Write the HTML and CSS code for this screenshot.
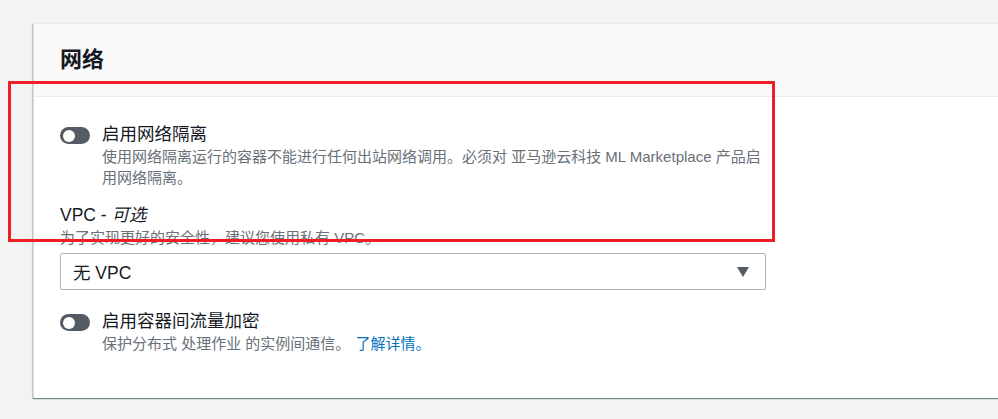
FILE: index.html
```html
<!DOCTYPE html>
<html lang="zh-CN">
<head>
<meta charset="utf-8">
<title>网络</title>
<link rel="stylesheet" href="styles.css">
</head>
<body>
<div class="page">
  <section class="card">
    <header class="card-header">
      <h2 class="card-title">网络</h2>
    </header>
    <div class="card-body">
      <div class="toggle-field">
        <span class="toggle"><span class="knob"></span></span>
        <div class="toggle-text">
          <div class="label">启用网络隔离</div>
          <div class="desc">使用网络隔离运行的容器不能进行任何出站网络调用。必须对 亚马逊云科技 ML Marketplace 产品启用网络隔离。</div>
        </div>
      </div>
      <div class="field">
        <div class="label">VPC - <i>可选</i></div>
        <div class="desc">为了实现更好的安全性，建议您使用私有 VPC。</div>
        <div class="select">
          <span>无 VPC</span>
          <span class="caret"></span>
        </div>
      </div>
      <div class="toggle-field second">
        <span class="toggle"><span class="knob"></span></span>
        <div class="toggle-text">
          <div class="label">启用容器间流量加密</div>
          <div class="desc">保护分布式 处理作业 的实例间通信。 <a class="link" href="#">了解详情。</a></div>
        </div>
      </div>
    </div>
  </section>
  <div class="highlight"></div>
</div>
</body>
</html>
```
FILE: styles.css
```css
html, body {
  margin: 0;
  padding: 0;
}
body {
  background: #f2f3f3;
  font-family: "Liberation Sans", "Noto Sans CJK SC", sans-serif;
  color: #16191f;
  width: 998px;
  height: 419px;
  overflow: hidden;
}
.page {
  position: relative;
  padding-top: 23px;
  padding-left: 33px;
  overflow: hidden;
}
.card {
  margin-right: -40px;
  background: #fff;
  border-top: 1px solid #eaeded;
  border-left: 1px solid #d5dbdb;
  box-shadow: 0 1px 1px 0 rgba(0, 28, 36, 0.45), -1px 1px 1px 0 rgba(0, 28, 36, 0.12);
  margin-bottom: 4px;
}
.card-header {
  height: 72px;
  background: #fafafa;
  border-bottom: 1px solid #eaeded;
  display: flex;
  align-items: center;
  padding-left: 26px;
}
.card-title {
  margin: 0;
  font-size: 22px;
  font-weight: 700;
  line-height: 26px;
  color: #16191f;
}
.card-body {
  width: 706px;
  padding: 26px 0 44px 26px;
}
.toggle-field {
  display: flex;
  gap: 12px;
}
.toggle-field.second {
  margin-top: 20px;
}
.toggle {
  flex: none;
  width: 30px;
  height: 17px;
  margin-top: 4px;
  border-radius: 9px;
  background: #545b64;
  display: flex;
  align-items: center;
  padding-left: 3px;
  box-sizing: border-box;
}
.knob {
  width: 12px;
  height: 12px;
  border-radius: 50%;
  background: #fff;
}
.toggle-text {
  flex: 1;
}
.label {
  font-size: 17.5px;
  line-height: 23px;
  color: #16191f;
}
.label i {
  font-style: italic;
}
.desc {
  font-size: 15px;
  line-height: 21px;
  color: #687078;
}
.link {
  color: #0073bb;
  text-decoration: none;
  margin-left: 1px;
}
.field {
  margin-top: 16px;
}
.select {
  margin-top: 5px;
  height: 37px;
  box-sizing: border-box;
  border: 1px solid #aab7b8;
  border-radius: 2px;
  display: flex;
  align-items: center;
  justify-content: space-between;
  padding: 0 16px 0 12px;
  font-size: 17.5px;
  color: #16191f;
}
.caret {
  width: 0;
  height: 0;
  border-left: 6.5px solid transparent;
  border-right: 6.5px solid transparent;
  border-top: 10px solid #545b64;
}
.highlight {
  position: absolute;
  left: 8px;
  top: 81px;
  width: 767px;
  height: 161px;
  box-sizing: border-box;
  border: 3px solid #ee1d26;
}
```
